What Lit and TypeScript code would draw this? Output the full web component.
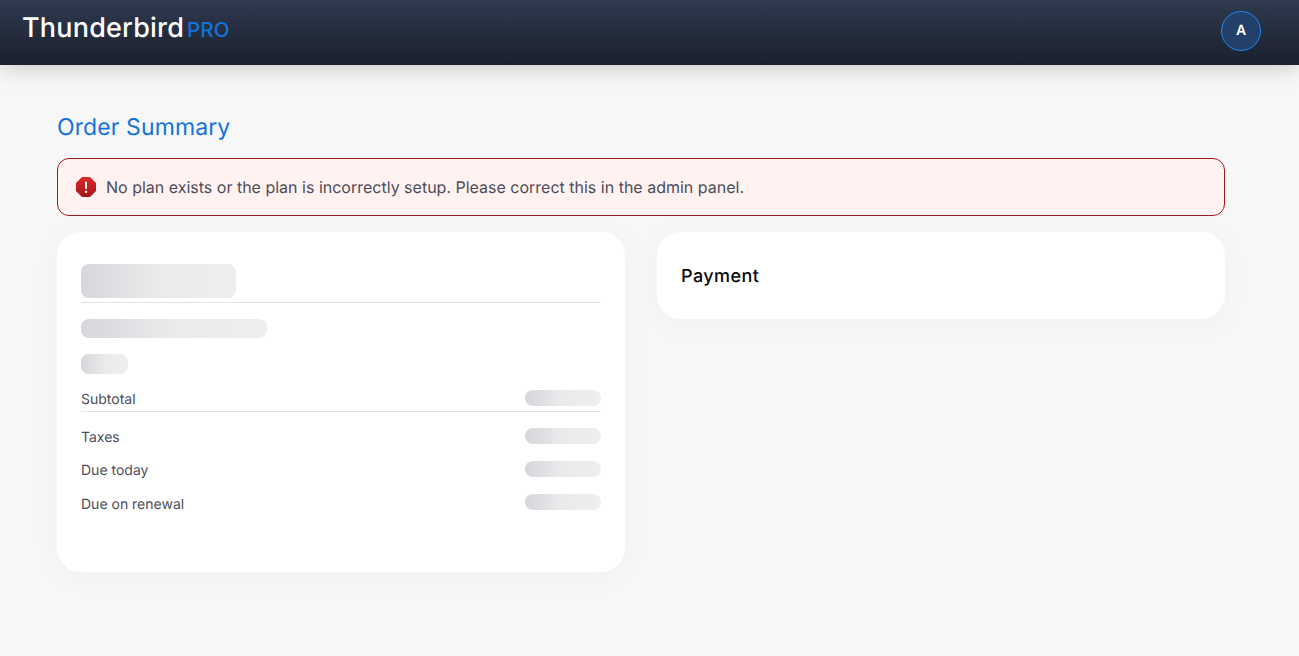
import { LitElement, html, css } from "lit";
import { customElement } from "lit/decorators.js";

@customElement("app-root")
export class AppRoot extends LitElement {
  static styles = css`
    :host { display: block; min-height: 656px; background: #f7f7f7; font-family: Inter, "Liberation Sans", sans-serif; overflow: hidden; text-rendering: geometricPrecision; }
    header { height: 65px; box-sizing: border-box; background: linear-gradient(180deg, #2f3a50 0%, #1a202c 100%); box-shadow: 0 4px 20px rgba(0,0,0,.17); display: flex; align-items: center; justify-content: space-between; padding: 0 38px 0 22px; position: relative; }
    .logo { display: flex; align-items: baseline; gap: 3px; margin-top: -11px; font-family: Inter, sans-serif; font-weight: 500; }
    .tb { color: #fff; font-size: 27px; letter-spacing: .2px; }
    .pro { color: #1373d9; font-size: 20.5px; letter-spacing: .1px; }
    .avatar { width: 40px; height: 40px; box-sizing: border-box; border-radius: 50%; border: 1px solid #1e88f5; background: #22406a; color: #fff; font-size: 14px; font-weight: 600; display: flex; align-items: center; justify-content: center; margin-top: -4px; }
    main { padding: 47px 74px 0 57px; }
    h1 { margin: 0 0 16px; font-size: 23px; line-height: 30px; font-weight: 400; color: #1373d9; letter-spacing: .1px; }
    .alert { height: 58px; box-sizing: border-box; border: 1px solid #9b1c1c; border-radius: 12px; background: #fff2f1; display: flex; align-items: center; gap: 10px; padding: 0 18px; color: #4c4d58; font-size: 16px; margin-bottom: 16px; }
    .alert svg { width: 20px; height: 20px; flex: none; }
    .cols { display: grid; grid-template-columns: 568px 568px; gap: 32px; align-items: start; }
    .card { background: #fff; border-radius: 24px; padding: 24px; box-sizing: border-box; box-shadow: 0 4px 32px rgba(0,0,0,.03); }
    .summary { height: 340px; padding-top: 32px; }
    .pay { height: 87px; padding-top: 26px; display: flex; align-items: center; font-size: 18px; font-weight: 500; color: #0a0a0a; letter-spacing: .45px; }
    .sk { background: linear-gradient(90deg, #d6d6db 0%, #ebebed 50%, #eeeef0 100%); }
    .s1 { width: 155px; height: 34px; border-radius: 8px; }
    .hr { height: 1px; background: #e3e4e6; }
    .mt4 { margin-top: 4px; }
    .mt5 { margin-top: 5px; }
    .s2 { width: 186px; height: 19px; border-radius: 8px; margin-top: 16px; }
    .s3 { width: 47px; height: 20px; border-radius: 8px; margin-top: 16px; }
    .row { display: flex; justify-content: space-between; align-items: center; color: #4c4d58; font-size: 14px; height: 16px; }
    .row .sk { width: 76px; height: 16px; border-radius: 8px; }
    .mt16 { margin-top: 16px; }
    .mt17 { margin-top: 17px; }
    .label { position: relative; top: 1px; }
    .t3 .label { top: 2px; }
  `;
  render() {
    return html`
      <header>
        <div class="logo"><span class="tb">Thunderbird</span><span class="pro">PRO</span></div>
        <div class="avatar">A</div>
      </header>
      <main>
        <h1>Order Summary</h1>
        <div class="alert">
          <svg viewBox="0 0 20 20"><defs><linearGradient id="g" x1="0" y1="0" x2="0" y2="1"><stop offset="0" stop-color="#d92a2a"/><stop offset="1" stop-color="#a81515"/></linearGradient></defs><polygon points="6,0 14,0 20,6 20,14 14,20 6,20 0,14 0,6" fill="url(#g)"/><rect x="9" y="4.5" width="2" height="7.5" rx="1" fill="#fff"/><circle cx="10" cy="14.8" r="1.2" fill="#fff"/></svg>
          <span>No plan exists or the plan is incorrectly setup. Please correct this in the admin panel.</span>
        </div>
        <div class="cols">
          <section class="card summary">
            <div class="sk s1"></div>
            <div class="hr mt4"></div>
            <div class="sk s2"></div>
            <div class="sk s3"></div>
            <div class="row mt16"><span class="label">Subtotal</span><div class="sk"></div></div>
            <div class="hr mt5"></div>
            <div class="row mt16"><span class="label">Taxes</span><div class="sk"></div></div>
            <div class="row mt17"><span class="label">Due today</span><div class="sk"></div></div>
            <div class="row t3 mt17"><span class="label">Due on renewal</span><div class="sk"></div></div>
          </section>
          <section class="card pay">Payment</section>
        </div>
      </main>
    `;
  }
}
